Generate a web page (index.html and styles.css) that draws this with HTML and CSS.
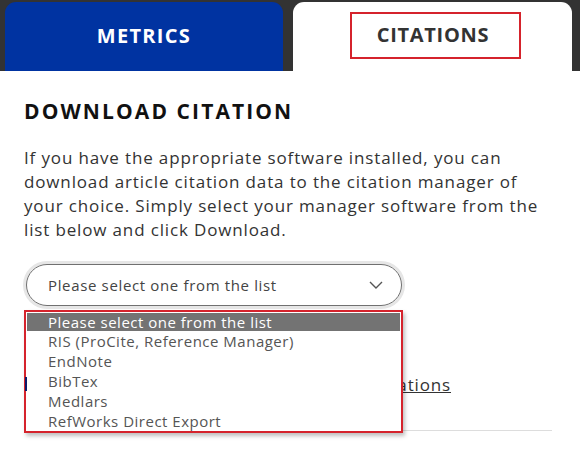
FILE: index.html
```html
<!DOCTYPE html>
<html lang="en">
<head>
<meta charset="utf-8">
<title>Citations</title>
<link rel="stylesheet" href="styles.css">
</head>
<body>
<nav class="tabs">
  <div class="tab tab-metrics">METRICS</div>
  <div class="tab tab-citations"><span class="focus-box">CITATIONS</span></div>
</nav>
<main class="panel">
  <h2 class="title">DOWNLOAD CITATION</h2>
  <p class="intro">If you have the appropriate software installed, you can download article citation data to the citation manager of your choice. Simply select your manager software from the list below and click Download.</p>
  <div class="select-wrap">
    <div class="select">
      <span class="select-text">Please select one from the list</span>
      <svg class="chev" width="14" height="8" viewBox="0 0 14 8"><path d="M1 1l6 6 6-6" fill="none" stroke="#555" stroke-width="1.4"/></svg>
    </div>
    <ul class="options">
      <li class="opt active">Please select one from the list</li>
      <li class="opt">RIS (ProCite, Reference Manager)</li>
      <li class="opt">EndNote</li>
      <li class="opt">BibTex</li>
      <li class="opt">Medlars</li>
      <li class="opt">RefWorks Direct Export</li>
    </ul>
  </div>
  <div class="link-row">
    <span class="link-icon"></span>
    <a class="link" href="#">Download all citations</a>
  </div>
  <hr class="rule">
</main>
</body>
</html>
```
FILE: styles.css
```css
* { box-sizing: border-box; }
html, body { margin: 0; padding: 0; background: #fff; }
body { font-family: "Open Sans", "Noto Sans", sans-serif; color: #333; width: 580px; height: 456px; overflow: hidden; }

.tabs { display: flex; background: #333; padding: 2px 8px 0 5px; gap: 10px; height: 71px; }
.tab { border-radius: 11px 11px 0 0; display: flex; align-items: center; justify-content: center; font-weight: 700; font-size: 20px; }
.tab-metrics { width: 278px; background: #0033a1; color: #fff; padding-bottom: 2px; letter-spacing: 1.3px; }
.tab-citations { flex: 1; background: #fff; color: #333; padding-bottom: 2px; letter-spacing: 0.7px; }
.focus-box { border: 2px solid #d5232c; padding: 9px 30px 10px 25px; margin-left: 6px; line-height: 24px; }

.panel { padding: 0 28px 0 24px; position: relative; }
.title { margin: 26px 0 0; font-size: 21px; font-weight: 700; color: #111; letter-spacing: 2.1px; line-height: 28px; }
.intro { margin: 21px 0 0; font-size: 17px; line-height: 24px; color: #333; letter-spacing: 0.85px; }

.select-wrap { position: relative; margin-top: 22px; }
.select { margin-left: 2px; width: 376px; height: 42px; border: 1px solid #707070; border-radius: 21px; box-shadow: 0 0 0 3px #e6e6e6; display: flex; align-items: center; justify-content: space-between; padding: 0 18px 0 21px; font-size: 15px; color: #444; letter-spacing: 0.65px; }
.chev { margin-top: -1px; }

.options { position: absolute; left: 0; top: 46px; width: 379px; height: 123px; overflow: hidden; list-style: none; margin: 0; padding: 1px 1px; border: 2px solid #d5232c; background: #fff; box-shadow: 2px 3px 4px rgba(0,0,0,0.25); z-index: 2; }
.opt { font-size: 15px; line-height: 20px; color: #555; padding-left: 21px; letter-spacing: 0.5px; }
.opt.active { background: #737373; color: #fff; line-height: 18px; }

.link-row { display: flex; align-items: center; justify-content: space-between; width: 427px; margin-top: 66px; height: 24px; }
.link-icon { width: 2px; height: 14px; background: #0a1a6a; margin-left: 1px; position: relative; z-index: 3; }
.link { color: #333; font-size: 17px; letter-spacing: 0.85px; }
.rule { border: 0; border-top: 1px solid #ddd; margin: 34px 0 0; }
```
